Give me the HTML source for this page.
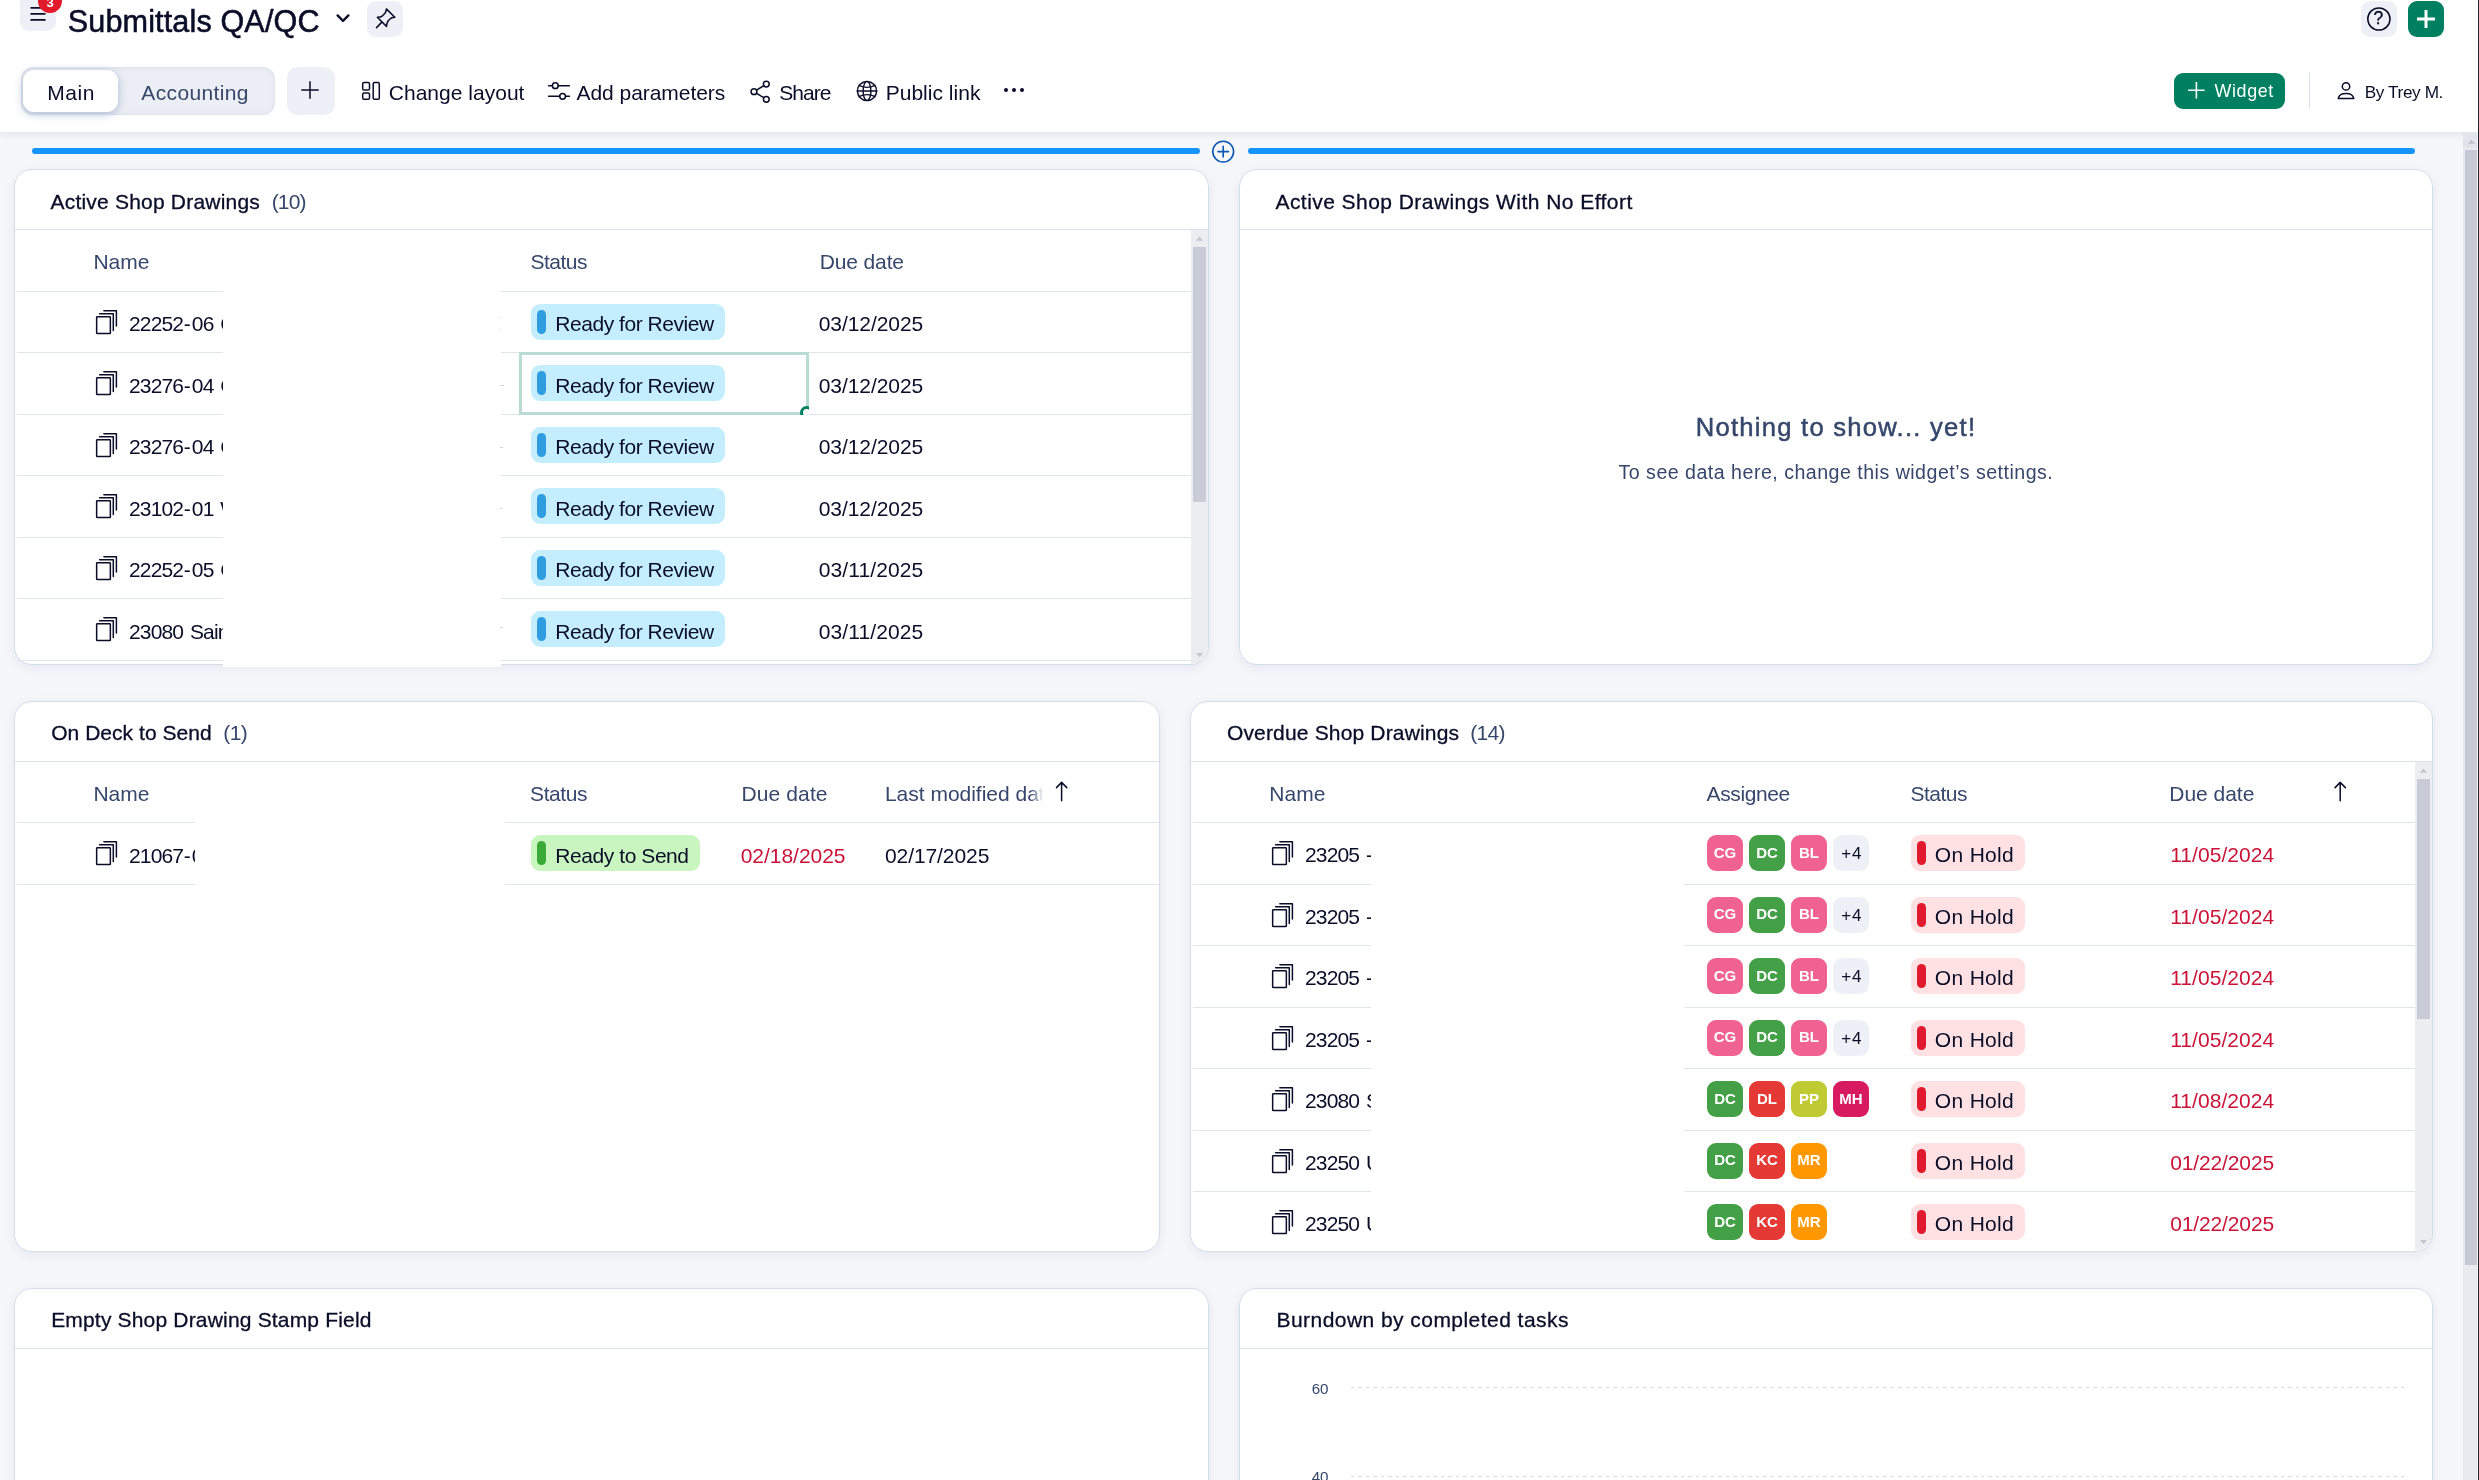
<!DOCTYPE html>
<html><head><meta charset="utf-8"><title>Submittals QA/QC</title>
<style>
html,body{margin:0;padding:0;}
body{width:2479px;height:1480px;overflow:hidden;background:#f6f7fa;font-family:"Liberation Sans",sans-serif;position:relative;}
#root{position:absolute;left:0;top:0;width:2479px;height:1480px;overflow:hidden;will-change:transform;}
#root div,#root span,#root svg{position:absolute;box-sizing:border-box;}
#root span{white-space:pre;}
.card{background:#fff;border:1px solid #d5dcea;border-radius:18px;box-shadow:0 3px 12px rgba(170,182,205,.24);}
.ln{height:1.5px;background:#e2e7f0;}
.av{width:36px;height:36px;border-radius:9px;}
#root i{font-style:normal;margin-left:.7px;letter-spacing:.95px;}
</style></head><body><div id="root">
<div style="left:0px;top:0px;width:2479px;height:132px;background:#fff;box-shadow:0 2px 9px rgba(150,165,195,.26);"></div>
<div style="left:20px;top:-6px;width:36px;height:37px;background:#edf0f6;border-radius:9px;"></div>
<svg style="left:28px;top:4px;" width="20" height="20" viewBox="28 4 20 20"><path d="M31.1 7.8H44.9M31.1 13.8H44.9M31.1 19.9H44.9" fill="none" stroke="#0a0d28" stroke-linecap="round" stroke-linejoin="round" stroke-width="1.7"/></svg>
<div style="left:37.9px;top:-11.1px;width:24.1px;height:24.1px;background:#e21a2c;border-radius:12.05px;"></div>
<span style="left:46.38px;top:-3.70px;font-size:13px;line-height:13px;color:#fff;font-weight:700;">3</span>
<span style="left:67.78px;top:5.60px;font-size:30.6px;line-height:30.6px;color:#0a0d28;letter-spacing:0.122px;-webkit-text-stroke:0.55px #0a0d28;">Submittals QA/QC</span>
<svg style="left:333px;top:11px;" width="20" height="14" viewBox="333 11 20 14"><path d="M337.6 15.4L343 20.8L348.4 15.4" fill="none" stroke="#0a0d28" stroke-linecap="round" stroke-linejoin="round" stroke-width="2.4"/></svg>
<div style="left:367px;top:1px;width:36px;height:36px;background:#edf0f6;border-radius:9px;"></div>
<svg style="left:372px;top:5px;" width="28" height="28" viewBox="372 5 28 28"><path d="M386.4 8.9L394.8 17.3Q391.3 17.6 390.3 18.7L388 21Q386.9 22.6 386.5 26.4L377.3 17.3Q380.9 17.1 382.5 15.8L385 13.2Q386.1 11.7 386.4 8.9ZM381.6 22.4L376.5 27.6" fill="none" stroke="#0a0d28" stroke-linecap="round" stroke-linejoin="round" stroke-width="1.5"/></svg>
<div style="left:2361px;top:1px;width:36px;height:36px;background:#edf0f6;border-radius:9px;"></div>
<svg style="left:2364px;top:4px;" width="30" height="30" viewBox="2364 4 30 30"><circle cx="2378.9" cy="19" r="11.1" fill="none" stroke="#0a0d28" stroke-linecap="round" stroke-linejoin="round" stroke-width="1.5"/></svg>
<span style="left:2373.60px;top:10.49px;font-size:17.5px;line-height:17.5px;color:#0a0d28;-webkit-text-stroke:0.35px #0a0d28;">?</span>
<div style="left:2408px;top:1px;width:36px;height:36px;background:#008060;border-radius:9px;"></div>
<svg style="left:2412px;top:5px;" width="28" height="28" viewBox="2412 5 28 28"><path d="M2426 10V28M2417 19H2435" fill="none" stroke="#fff" stroke-width="3"/></svg>
<div style="left:2477.7px;top:0px;width:1.3px;height:1480px;background:#22242c;"></div>
<div style="left:21px;top:67px;width:254px;height:48px;background:#ebeef4;border-radius:12px;box-shadow:inset 0 0 5px rgba(200,208,224,.55);"></div>
<div style="left:23px;top:70px;width:95px;height:42px;background:#fff;border-radius:11px;box-shadow:0 2px 8px rgba(110,135,180,.5);"></div>
<span style="left:47.26px;top:82.22px;font-size:21px;line-height:21px;color:#0a0d28;letter-spacing:0.553px;">Main</span>
<span style="left:141.26px;top:82.22px;font-size:21px;line-height:21px;color:#36476b;letter-spacing:0.376px;">Accounting</span>
<div style="left:287px;top:67px;width:48px;height:48px;background:#edf0f6;border-radius:11px;"></div>
<svg style="left:298px;top:78px;" width="24" height="24" viewBox="298 78 24 24"><path d="M310 81.8V98.2M301.8 90H318.2" fill="none" stroke="#0a0d28" stroke-linecap="round" stroke-linejoin="round" stroke-width="1.5"/></svg>
<svg style="left:360px;top:80px;" width="22" height="22" viewBox="360 80 22 22"><rect x="362.7" y="82.6" width="6.8" height="7.4" rx="1.3" fill="none" stroke="#0a0d28" stroke-linecap="round" stroke-linejoin="round" stroke-width="1.5"/><rect x="362.7" y="93.1" width="6.8" height="6.2" rx="1.3" fill="none" stroke="#0a0d28" stroke-linecap="round" stroke-linejoin="round" stroke-width="1.5"/><rect x="373.2" y="82.6" width="6.1" height="16.7" rx="1.3" fill="none" stroke="#0a0d28" stroke-linecap="round" stroke-linejoin="round" stroke-width="1.5"/></svg>
<span style="left:388.76px;top:82.22px;font-size:21px;line-height:21px;color:#0a0d28;letter-spacing:0.021px;">Change layout</span>
<svg style="left:546px;top:80px;" width="26" height="22" viewBox="546 80 26 22"><path d="M548.6 85.7H552.4M558.2 85.7H569.4M548.6 96.3H559.7M565.5 96.3H569.4" fill="none" stroke="#0a0d28" stroke-linecap="round" stroke-linejoin="round" stroke-width="1.5"/><circle cx="555.3" cy="85.7" r="2.9" fill="none" stroke="#0a0d28" stroke-linecap="round" stroke-linejoin="round" stroke-width="1.5"/><circle cx="562.6" cy="96.3" r="2.9" fill="none" stroke="#0a0d28" stroke-linecap="round" stroke-linejoin="round" stroke-width="1.5"/></svg>
<span style="left:576.56px;top:82.22px;font-size:21px;line-height:21px;color:#0a0d28;letter-spacing:-0.056px;">Add parameters</span>
<svg style="left:748px;top:78px;" width="26" height="28" viewBox="748 78 26 28"><circle cx="766.3" cy="84.1" r="2.9" fill="none" stroke="#0a0d28" stroke-linecap="round" stroke-linejoin="round" stroke-width="1.5"/><circle cx="754" cy="91.7" r="2.9" fill="none" stroke="#0a0d28" stroke-linecap="round" stroke-linejoin="round" stroke-width="1.5"/><circle cx="766.3" cy="99.3" r="2.9" fill="none" stroke="#0a0d28" stroke-linecap="round" stroke-linejoin="round" stroke-width="1.5"/><path d="M756.6 90.1L763.7 85.7M756.6 93.3L763.7 97.7" fill="none" stroke="#0a0d28" stroke-linecap="round" stroke-linejoin="round" stroke-width="1.5"/></svg>
<span style="left:779.16px;top:82.22px;font-size:21px;line-height:21px;color:#0a0d28;letter-spacing:-0.939px;">Share</span>
<svg style="left:855px;top:79px;" width="24" height="24" viewBox="855 79 24 24"><circle cx="867" cy="91" r="9.6" fill="none" stroke="#0a0d28" stroke-linecap="round" stroke-linejoin="round" stroke-width="1.5"/><ellipse cx="867" cy="91" rx="3.9" ry="9.6" fill="none" stroke="#0a0d28" stroke-linecap="round" stroke-linejoin="round" stroke-width="1.4"/><path d="M857.4 91H876.6" fill="none" stroke="#0a0d28" stroke-linecap="round" stroke-linejoin="round" stroke-width="1.7"/><path d="M859 85.3Q867 89.4 875 85.3M859 96.7Q867 92.6 875 96.7" fill="none" stroke="#0a0d28" stroke-linecap="round" stroke-linejoin="round" stroke-width="1.4"/></svg>
<span style="left:885.66px;top:82.22px;font-size:21px;line-height:21px;color:#0a0d28;letter-spacing:0.024px;">Public link</span>
<div style="left:1004.0999999999999px;top:88.1px;width:4.4px;height:4.4px;background:#0a0d28;border-radius:3px;"></div>
<div style="left:1011.8px;top:88.1px;width:4.4px;height:4.4px;background:#0a0d28;border-radius:3px;"></div>
<div style="left:1019.5px;top:88.1px;width:4.4px;height:4.4px;background:#0a0d28;border-radius:3px;"></div>
<div style="left:2174px;top:73px;width:111px;height:36px;background:#008060;border-radius:9px;"></div>
<svg style="left:2186px;top:80px;" width="22" height="22" viewBox="2186 80 22 22"><path d="M2196.4 82V98.4M2188.2 90.2H2204.6" fill="none" stroke="#fff" stroke-width="1.6"/></svg>
<span style="left:2214.58px;top:83.25px;font-size:17.9px;line-height:17.9px;color:#fff;letter-spacing:0.585px;">Widget</span>
<div style="left:2309px;top:73px;width:1.2px;height:36px;background:#dbe1ec;"></div>
<svg style="left:2335px;top:80px;" width="24" height="22" viewBox="2335 80 24 22"><circle cx="2346" cy="86.4" r="3.7" fill="none" stroke="#0a0d28" stroke-linecap="round" stroke-linejoin="round" stroke-width="1.5"/><path d="M2338.2 98.6C2338.8 95.3 2341.8 93.6 2346 93.6C2350.2 93.6 2353.2 95.3 2353.8 98.6Z" fill="none" stroke="#0a0d28" stroke-linecap="round" stroke-linejoin="round" stroke-width="1.5"/></svg>
<span style="left:2364.81px;top:83.84px;font-size:17.2px;line-height:17.2px;color:#0a0d28;letter-spacing:-0.399px;">By Trey M.</span>
<div style="left:2463px;top:132px;width:14px;height:1348px;background:#e8eaef;"></div>
<div style="left:2463px;top:132px;width:14px;height:16px;background:#e1e4ea;"></div>
<svg style="left:2466px;top:138px;" width="11" height="8" viewBox="2466 138 11 8"><path d="M2467.8 143.8L2471.4 139.8L2475 143.8Z" fill="#bcc1cc"/></svg>
<div style="left:2465px;top:150px;width:12px;height:1115px;background:#c5c9d3;"></div>
<div style="left:32px;top:148px;width:1168px;height:6px;background:#1595fb;border-radius:3px;"></div>
<div style="left:1248px;top:148px;width:1167px;height:6px;background:#1595fb;border-radius:3px;"></div>
<svg style="left:1210px;top:139px;" width="26" height="26" viewBox="1210 139 26 26"><circle cx="1223.2" cy="151.6" r="10.4" fill="none" stroke="#0b57b3" stroke-width="1.6"/><path d="M1223.2 146.3V156.9M1217.9 151.6H1228.5" fill="none" stroke="#0b57b3" stroke-width="1.6" stroke-linecap="round"/></svg>
<div class="card" style="left:14px;top:169px;width:1195px;height:496px;"></div>
<div style="left:15px;top:229px;width:1193px;height:1px;background:#dae0eb;"></div>
<span style="left:50.46px;top:191.22px;font-size:21px;line-height:21px;color:#0a0d28;letter-spacing:0.208px;-webkit-text-stroke:0.3px #0a0d28;">Active Shop Drawings</span>
<span style="left:271.66px;top:191.22px;font-size:21px;line-height:21px;color:#36476b;letter-spacing:-0.823px;">(10)</span>
<span style="left:93.46px;top:251.22px;font-size:21px;line-height:21px;color:#36476b;letter-spacing:-0.014px;">Name</span>
<span style="left:530.46px;top:251.22px;font-size:21px;line-height:21px;color:#36476b;letter-spacing:-0.511px;">Status</span>
<span style="left:819.66px;top:251.22px;font-size:21px;line-height:21px;color:#36476b;letter-spacing:-0.121px;">Due date</span>
<div style="left:17px;top:291px;width:1174px;height:1px;background:#e0e5ef;"></div>
<div style="left:17px;top:352px;width:1174px;height:1px;background:#e0e5ef;"></div>
<div style="left:17px;top:414px;width:1174px;height:1px;background:#e0e5ef;"></div>
<div style="left:17px;top:475px;width:1174px;height:1px;background:#e0e5ef;"></div>
<div style="left:17px;top:537px;width:1174px;height:1px;background:#e0e5ef;"></div>
<div style="left:17px;top:598px;width:1174px;height:1px;background:#e0e5ef;"></div>
<div style="left:17px;top:660px;width:1174px;height:1px;background:#e0e5ef;"></div>
<svg style="left:95px;top:307.9px;" width="24" height="28" viewBox="95 307.9 24 28"><g transform="translate(0,0.0)"><rect x="96.65" y="316.7" width="13.7" height="16.8" rx="0.6" fill="none" stroke="#0a0d28" stroke-linecap="round" stroke-linejoin="round" stroke-width="1.5"/><path d="M99.6 313.6H113.3V330.4M103.9 310.6H116.4V326" fill="none" stroke="#0a0d28" stroke-linecap="round" stroke-linejoin="round" stroke-width="1.5"/></g></svg>
<span style="left:128.96px;top:313.22px;font-size:21px;line-height:21px;color:#0a0d28;letter-spacing:-0.84px;word-spacing:1.8px;">22252<i>-</i>06 Ca</span>
<div style="left:531px;top:303.9px;width:194px;height:36px;background:#c4eefd;border-radius:9px;"></div>
<div style="left:537px;top:309.9px;width:9px;height:24px;background:#2d9de0;border-radius:4.5px;"></div>
<span style="left:555.36px;top:313.22px;font-size:21px;line-height:21px;color:#0a0d28;letter-spacing:-0.470px;">Ready for Review</span>
<span style="left:818.76px;top:313.22px;font-size:21px;line-height:21px;color:#0a0d28;letter-spacing:-0.069px;">03/12/2025</span>
<svg style="left:95px;top:369.4px;" width="24" height="28" viewBox="95 369.4 24 28"><g transform="translate(0,61.5)"><rect x="96.65" y="316.7" width="13.7" height="16.8" rx="0.6" fill="none" stroke="#0a0d28" stroke-linecap="round" stroke-linejoin="round" stroke-width="1.5"/><path d="M99.6 313.6H113.3V330.4M103.9 310.6H116.4V326" fill="none" stroke="#0a0d28" stroke-linecap="round" stroke-linejoin="round" stroke-width="1.5"/></g></svg>
<span style="left:128.96px;top:374.72px;font-size:21px;line-height:21px;color:#0a0d28;letter-spacing:-0.84px;word-spacing:1.8px;">23276<i>-</i>04 Ca</span>
<div style="left:531px;top:365.4px;width:194px;height:36px;background:#c4eefd;border-radius:9px;"></div>
<div style="left:537px;top:371.4px;width:9px;height:24px;background:#2d9de0;border-radius:4.5px;"></div>
<span style="left:555.36px;top:374.72px;font-size:21px;line-height:21px;color:#0a0d28;letter-spacing:-0.470px;">Ready for Review</span>
<span style="left:818.76px;top:374.72px;font-size:21px;line-height:21px;color:#0a0d28;letter-spacing:-0.069px;">03/12/2025</span>
<svg style="left:95px;top:430.9px;" width="24" height="28" viewBox="95 430.9 24 28"><g transform="translate(0,123.0)"><rect x="96.65" y="316.7" width="13.7" height="16.8" rx="0.6" fill="none" stroke="#0a0d28" stroke-linecap="round" stroke-linejoin="round" stroke-width="1.5"/><path d="M99.6 313.6H113.3V330.4M103.9 310.6H116.4V326" fill="none" stroke="#0a0d28" stroke-linecap="round" stroke-linejoin="round" stroke-width="1.5"/></g></svg>
<span style="left:128.96px;top:436.22px;font-size:21px;line-height:21px;color:#0a0d28;letter-spacing:-0.84px;word-spacing:1.8px;">23276<i>-</i>04 Ca</span>
<div style="left:531px;top:426.9px;width:194px;height:36px;background:#c4eefd;border-radius:9px;"></div>
<div style="left:537px;top:432.9px;width:9px;height:24px;background:#2d9de0;border-radius:4.5px;"></div>
<span style="left:555.36px;top:436.22px;font-size:21px;line-height:21px;color:#0a0d28;letter-spacing:-0.470px;">Ready for Review</span>
<span style="left:818.76px;top:436.22px;font-size:21px;line-height:21px;color:#0a0d28;letter-spacing:-0.069px;">03/12/2025</span>
<svg style="left:95px;top:492.4px;" width="24" height="28" viewBox="95 492.4 24 28"><g transform="translate(0,184.5)"><rect x="96.65" y="316.7" width="13.7" height="16.8" rx="0.6" fill="none" stroke="#0a0d28" stroke-linecap="round" stroke-linejoin="round" stroke-width="1.5"/><path d="M99.6 313.6H113.3V330.4M103.9 310.6H116.4V326" fill="none" stroke="#0a0d28" stroke-linecap="round" stroke-linejoin="round" stroke-width="1.5"/></g></svg>
<span style="left:128.96px;top:497.72px;font-size:21px;line-height:21px;color:#0a0d28;letter-spacing:-0.84px;word-spacing:1.8px;">23102<i>-</i>01 W</span>
<div style="left:531px;top:488.4px;width:194px;height:36px;background:#c4eefd;border-radius:9px;"></div>
<div style="left:537px;top:494.4px;width:9px;height:24px;background:#2d9de0;border-radius:4.5px;"></div>
<span style="left:555.36px;top:497.72px;font-size:21px;line-height:21px;color:#0a0d28;letter-spacing:-0.470px;">Ready for Review</span>
<span style="left:818.76px;top:497.72px;font-size:21px;line-height:21px;color:#0a0d28;letter-spacing:-0.069px;">03/12/2025</span>
<svg style="left:95px;top:553.9px;" width="24" height="28" viewBox="95 553.9 24 28"><g transform="translate(0,246.0)"><rect x="96.65" y="316.7" width="13.7" height="16.8" rx="0.6" fill="none" stroke="#0a0d28" stroke-linecap="round" stroke-linejoin="round" stroke-width="1.5"/><path d="M99.6 313.6H113.3V330.4M103.9 310.6H116.4V326" fill="none" stroke="#0a0d28" stroke-linecap="round" stroke-linejoin="round" stroke-width="1.5"/></g></svg>
<span style="left:128.96px;top:559.22px;font-size:21px;line-height:21px;color:#0a0d28;letter-spacing:-0.84px;word-spacing:1.8px;">22252<i>-</i>05 Ca</span>
<div style="left:531px;top:549.9px;width:194px;height:36px;background:#c4eefd;border-radius:9px;"></div>
<div style="left:537px;top:555.9px;width:9px;height:24px;background:#2d9de0;border-radius:4.5px;"></div>
<span style="left:555.36px;top:559.22px;font-size:21px;line-height:21px;color:#0a0d28;letter-spacing:-0.470px;">Ready for Review</span>
<span style="left:818.76px;top:559.22px;font-size:21px;line-height:21px;color:#0a0d28;letter-spacing:0.105px;">03/11/2025</span>
<svg style="left:95px;top:615.4px;" width="24" height="28" viewBox="95 615.4 24 28"><g transform="translate(0,307.5)"><rect x="96.65" y="316.7" width="13.7" height="16.8" rx="0.6" fill="none" stroke="#0a0d28" stroke-linecap="round" stroke-linejoin="round" stroke-width="1.5"/><path d="M99.6 313.6H113.3V330.4M103.9 310.6H116.4V326" fill="none" stroke="#0a0d28" stroke-linecap="round" stroke-linejoin="round" stroke-width="1.5"/></g></svg>
<span style="left:128.96px;top:620.72px;font-size:21px;line-height:21px;color:#0a0d28;letter-spacing:-0.84px;word-spacing:1.8px;">23080 Saint</span>
<div style="left:531px;top:611.4px;width:194px;height:36px;background:#c4eefd;border-radius:9px;"></div>
<div style="left:537px;top:617.4px;width:9px;height:24px;background:#2d9de0;border-radius:4.5px;"></div>
<span style="left:555.36px;top:620.72px;font-size:21px;line-height:21px;color:#0a0d28;letter-spacing:-0.470px;">Ready for Review</span>
<span style="left:818.76px;top:620.72px;font-size:21px;line-height:21px;color:#0a0d28;letter-spacing:0.105px;">03/11/2025</span>
<div style="left:519.2px;top:352px;width:289.8px;height:63px;border:3px solid #badbd1;"></div>
<div style="left:519.2px;top:352px;width:289.8px;height:63px;overflow:hidden;"><div style="left:280.6px;top:53.7px;width:13px;height:13px;border-radius:7px;border:3px solid #00805f;background:#fff;"></div></div>
<div style="left:1191px;top:230px;width:17px;height:433.5px;background:#ecedf0;border-bottom-right-radius:16px;"></div>
<svg style="left:1195px;top:234px;" width="10" height="9" viewBox="1195 234 10 9"><path d="M1195.9 240.7L1199.5 236.5L1203.1 240.7Z" fill="#c3c7d0"/></svg>
<svg style="left:1195px;top:649.5px;" width="10" height="9" viewBox="1195 649.5 10 9"><path d="M1195.9 652.6L1199.5 656.8L1203.1 652.6Z" fill="#c3c7d0"/></svg>
<div style="left:1193px;top:247px;width:13px;height:255.3px;background:#c8ccd6;"></div>
<div style="left:222.5px;top:288px;width:278px;height:378.5px;background:#fff;"></div>
<div style="left:500.3px;top:317px;width:1.2px;height:1.2px;background:#cfd3dc;"></div>
<div style="left:500.3px;top:329.3px;width:1.2px;height:1.2px;background:#cfd3dc;"></div>
<div style="left:500.3px;top:385px;width:3.6px;height:1.2px;background:#cfd3dc;"></div>
<div style="left:500.3px;top:446.7px;width:3px;height:1.2px;background:#cfd3dc;"></div>
<div style="left:500.3px;top:508px;width:1.5px;height:1.2px;background:#cfd3dc;"></div>
<div style="left:500.3px;top:627.3px;width:3px;height:1.2px;background:#cfd3dc;"></div>
<div class="card" style="left:1239px;top:169px;width:1194px;height:496px;"></div>
<div style="left:1240px;top:229px;width:1192px;height:1px;background:#dae0eb;"></div>
<span style="left:1275.46px;top:191.22px;font-size:21px;line-height:21px;color:#0a0d28;letter-spacing:0.447px;-webkit-text-stroke:0.3px #0a0d28;">Active Shop Drawings With No Effort</span>
<span style="left:1695.78px;top:414.83px;font-size:25.6px;line-height:25.6px;color:#36476b;letter-spacing:1.249px;-webkit-text-stroke:0.5px #36476b;">Nothing to show... yet!</span>
<span style="left:1618.52px;top:462.81px;font-size:19.6px;line-height:19.6px;color:#36476b;letter-spacing:0.487px;">To see data here, change this widget’s settings.</span>
<div class="card" style="left:14px;top:701px;width:1146px;height:551px;"></div>
<div style="left:15px;top:761px;width:1144px;height:1px;background:#dae0eb;"></div>
<span style="left:51.16px;top:722.22px;font-size:21px;line-height:21px;color:#0a0d28;letter-spacing:0.041px;-webkit-text-stroke:0.3px #0a0d28;">On Deck to Send</span>
<span style="left:223.36px;top:722.22px;font-size:21px;line-height:21px;color:#36476b;letter-spacing:-0.591px;">(1)</span>
<span style="left:93.46px;top:783.32px;font-size:21px;line-height:21px;color:#36476b;letter-spacing:-0.014px;">Name</span>
<span style="left:530.06px;top:783.32px;font-size:21px;line-height:21px;color:#36476b;letter-spacing:-0.411px;">Status</span>
<span style="left:741.46px;top:783.32px;font-size:21px;line-height:21px;color:#36476b;letter-spacing:0.122px;">Due date</span>
<span style="left:884.96px;top:783.32px;font-size:21px;line-height:21px;color:#36476b;letter-spacing:-0.015px;">Last modified dat</span>
<div style="left:1030px;top:780px;width:18px;height:28px;background:linear-gradient(90deg,rgba(255,255,255,0),#fff 75%);"></div>
<svg style="left:1052px;top:778px;" width="20" height="26" viewBox="1052 778 20 26"><path d="M1061.6 800.7V782.6M1056.5 787.6L1061.6 782.4L1066.8 787.6" fill="none" stroke="#0a0d28" stroke-linecap="round" stroke-linejoin="round" stroke-width="1.5"/></svg>
<div style="left:17px;top:822px;width:1142px;height:1px;background:#e0e5ef;"></div>
<div style="left:17px;top:884px;width:1142px;height:1px;background:#e0e5ef;"></div>
<svg style="left:95px;top:839.3px;" width="24" height="28" viewBox="95 839.3 24 28"><g transform="translate(0,531.4)"><rect x="96.65" y="316.7" width="13.7" height="16.8" rx="0.6" fill="none" stroke="#0a0d28" stroke-linecap="round" stroke-linejoin="round" stroke-width="1.5"/><path d="M99.6 313.6H113.3V330.4M103.9 310.6H116.4V326" fill="none" stroke="#0a0d28" stroke-linecap="round" stroke-linejoin="round" stroke-width="1.5"/></g></svg>
<span style="left:128.96px;top:844.62px;font-size:21px;line-height:21px;color:#0a0d28;letter-spacing:-0.84px;word-spacing:1.8px;">21067<i>-</i>01</span>
<div style="left:531px;top:835.3px;width:169px;height:36px;background:#c9f5bf;border-radius:9px;"></div>
<div style="left:537px;top:841.3px;width:9px;height:24px;background:#3aa935;border-radius:4.5px;"></div>
<span style="left:555.36px;top:844.62px;font-size:21px;line-height:21px;color:#0a0d28;letter-spacing:-0.437px;">Ready to Send</span>
<span style="left:740.66px;top:844.62px;font-size:21px;line-height:21px;color:#cb1237;letter-spacing:-0.024px;">02/18/2025</span>
<span style="left:884.96px;top:844.62px;font-size:21px;line-height:21px;color:#0a0d28;letter-spacing:-0.080px;">02/17/2025</span>
<div style="left:195px;top:816px;width:310px;height:72px;background:#fff;"></div>
<div class="card" style="left:1190px;top:701px;width:1243px;height:551px;"></div>
<div style="left:1191px;top:761px;width:1241px;height:1px;background:#dae0eb;"></div>
<span style="left:1226.96px;top:722.22px;font-size:21px;line-height:21px;color:#0a0d28;letter-spacing:0.165px;-webkit-text-stroke:0.3px #0a0d28;">Overdue Shop Drawings</span>
<span style="left:1470.16px;top:722.22px;font-size:21px;line-height:21px;color:#36476b;letter-spacing:-0.656px;">(14)</span>
<span style="left:1269.26px;top:783.32px;font-size:21px;line-height:21px;color:#36476b;letter-spacing:0.086px;">Name</span>
<span style="left:1706.56px;top:783.32px;font-size:21px;line-height:21px;color:#36476b;letter-spacing:-0.386px;">Assignee</span>
<span style="left:1910.46px;top:783.32px;font-size:21px;line-height:21px;color:#36476b;letter-spacing:-0.511px;">Status</span>
<span style="left:2169.26px;top:783.32px;font-size:21px;line-height:21px;color:#36476b;letter-spacing:-0.021px;">Due date</span>
<svg style="left:2330px;top:778px;" width="20" height="26" viewBox="2330 778 20 26"><path d="M2340.2 800.7V782.6M2335.1 787.6L2340.2 782.4L2345.4 787.6" fill="none" stroke="#0a0d28" stroke-linecap="round" stroke-linejoin="round" stroke-width="1.5"/></svg>
<div style="left:1193px;top:822px;width:1222px;height:1px;background:#e0e5ef;"></div>
<div style="left:1193px;top:884px;width:1222px;height:1px;background:#e0e5ef;"></div>
<div style="left:1193px;top:945px;width:1222px;height:1px;background:#e0e5ef;"></div>
<div style="left:1193px;top:1007px;width:1222px;height:1px;background:#e0e5ef;"></div>
<div style="left:1193px;top:1068px;width:1222px;height:1px;background:#e0e5ef;"></div>
<div style="left:1193px;top:1130px;width:1222px;height:1px;background:#e0e5ef;"></div>
<div style="left:1193px;top:1191px;width:1222px;height:1px;background:#e0e5ef;"></div>
<svg style="left:1271px;top:839.1px;" width="24" height="28" viewBox="1271 839.1 24 28"><g transform="translate(1176,531.2)"><rect x="96.65" y="316.7" width="13.7" height="16.8" rx="0.6" fill="none" stroke="#0a0d28" stroke-linecap="round" stroke-linejoin="round" stroke-width="1.5"/><path d="M99.6 313.6H113.3V330.4M103.9 310.6H116.4V326" fill="none" stroke="#0a0d28" stroke-linecap="round" stroke-linejoin="round" stroke-width="1.5"/></g></svg>
<span style="left:1304.96px;top:844.42px;font-size:21px;line-height:21px;color:#0a0d28;letter-spacing:-0.84px;word-spacing:1.8px;">23205 - A</span>
<div style="left:1707px;top:835.1px;width:36px;height:36px;background:#f06292;border-radius:9px;"></div>
<span style="left:1707px;top:844.9px;width:36px;text-align:center;font-size:15px;line-height:16px;font-weight:700;color:#fff;">CG</span>
<div style="left:1749px;top:835.1px;width:36px;height:36px;background:#43a047;border-radius:9px;"></div>
<span style="left:1749px;top:844.9px;width:36px;text-align:center;font-size:15px;line-height:16px;font-weight:700;color:#fff;">DC</span>
<div style="left:1791px;top:835.1px;width:36px;height:36px;background:#f06292;border-radius:9px;"></div>
<span style="left:1791px;top:844.9px;width:36px;text-align:center;font-size:15px;line-height:16px;font-weight:700;color:#fff;">BL</span>
<div style="left:1833px;top:835.1px;width:36px;height:36px;background:#edf0f6;border-radius:9px;"></div>
<span style="left:1841.32px;top:845.21px;font-size:17px;line-height:17px;color:#0a0d28;letter-spacing:0.739px;">+4</span>
<div style="left:1911px;top:835.1px;width:114px;height:36px;background:#ffe1e3;border-radius:9px;"></div>
<div style="left:1917px;top:841.1px;width:9px;height:24px;background:#e1192c;border-radius:4.5px;"></div>
<span style="left:1934.86px;top:844.42px;font-size:21px;line-height:21px;color:#0a0d28;letter-spacing:0.307px;">On Hold</span>
<span style="left:2170.16px;top:844.42px;font-size:21px;line-height:21px;color:#cb1237;letter-spacing:0.049px;">11/05/2024</span>
<svg style="left:1271px;top:900.6px;" width="24" height="28" viewBox="1271 900.6 24 28"><g transform="translate(1176,592.7)"><rect x="96.65" y="316.7" width="13.7" height="16.8" rx="0.6" fill="none" stroke="#0a0d28" stroke-linecap="round" stroke-linejoin="round" stroke-width="1.5"/><path d="M99.6 313.6H113.3V330.4M103.9 310.6H116.4V326" fill="none" stroke="#0a0d28" stroke-linecap="round" stroke-linejoin="round" stroke-width="1.5"/></g></svg>
<span style="left:1304.96px;top:905.92px;font-size:21px;line-height:21px;color:#0a0d28;letter-spacing:-0.84px;word-spacing:1.8px;">23205 - A</span>
<div style="left:1707px;top:896.6px;width:36px;height:36px;background:#f06292;border-radius:9px;"></div>
<span style="left:1707px;top:906.4px;width:36px;text-align:center;font-size:15px;line-height:16px;font-weight:700;color:#fff;">CG</span>
<div style="left:1749px;top:896.6px;width:36px;height:36px;background:#43a047;border-radius:9px;"></div>
<span style="left:1749px;top:906.4px;width:36px;text-align:center;font-size:15px;line-height:16px;font-weight:700;color:#fff;">DC</span>
<div style="left:1791px;top:896.6px;width:36px;height:36px;background:#f06292;border-radius:9px;"></div>
<span style="left:1791px;top:906.4px;width:36px;text-align:center;font-size:15px;line-height:16px;font-weight:700;color:#fff;">BL</span>
<div style="left:1833px;top:896.6px;width:36px;height:36px;background:#edf0f6;border-radius:9px;"></div>
<span style="left:1841.32px;top:906.71px;font-size:17px;line-height:17px;color:#0a0d28;letter-spacing:0.739px;">+4</span>
<div style="left:1911px;top:896.6px;width:114px;height:36px;background:#ffe1e3;border-radius:9px;"></div>
<div style="left:1917px;top:902.6px;width:9px;height:24px;background:#e1192c;border-radius:4.5px;"></div>
<span style="left:1934.86px;top:905.92px;font-size:21px;line-height:21px;color:#0a0d28;letter-spacing:0.307px;">On Hold</span>
<span style="left:2170.16px;top:905.92px;font-size:21px;line-height:21px;color:#cb1237;letter-spacing:0.049px;">11/05/2024</span>
<svg style="left:1271px;top:962.1px;" width="24" height="28" viewBox="1271 962.1 24 28"><g transform="translate(1176,654.2)"><rect x="96.65" y="316.7" width="13.7" height="16.8" rx="0.6" fill="none" stroke="#0a0d28" stroke-linecap="round" stroke-linejoin="round" stroke-width="1.5"/><path d="M99.6 313.6H113.3V330.4M103.9 310.6H116.4V326" fill="none" stroke="#0a0d28" stroke-linecap="round" stroke-linejoin="round" stroke-width="1.5"/></g></svg>
<span style="left:1304.96px;top:967.42px;font-size:21px;line-height:21px;color:#0a0d28;letter-spacing:-0.84px;word-spacing:1.8px;">23205 - A</span>
<div style="left:1707px;top:958.1px;width:36px;height:36px;background:#f06292;border-radius:9px;"></div>
<span style="left:1707px;top:967.9px;width:36px;text-align:center;font-size:15px;line-height:16px;font-weight:700;color:#fff;">CG</span>
<div style="left:1749px;top:958.1px;width:36px;height:36px;background:#43a047;border-radius:9px;"></div>
<span style="left:1749px;top:967.9px;width:36px;text-align:center;font-size:15px;line-height:16px;font-weight:700;color:#fff;">DC</span>
<div style="left:1791px;top:958.1px;width:36px;height:36px;background:#f06292;border-radius:9px;"></div>
<span style="left:1791px;top:967.9px;width:36px;text-align:center;font-size:15px;line-height:16px;font-weight:700;color:#fff;">BL</span>
<div style="left:1833px;top:958.1px;width:36px;height:36px;background:#edf0f6;border-radius:9px;"></div>
<span style="left:1841.32px;top:968.21px;font-size:17px;line-height:17px;color:#0a0d28;letter-spacing:0.739px;">+4</span>
<div style="left:1911px;top:958.1px;width:114px;height:36px;background:#ffe1e3;border-radius:9px;"></div>
<div style="left:1917px;top:964.1px;width:9px;height:24px;background:#e1192c;border-radius:4.5px;"></div>
<span style="left:1934.86px;top:967.42px;font-size:21px;line-height:21px;color:#0a0d28;letter-spacing:0.307px;">On Hold</span>
<span style="left:2170.16px;top:967.42px;font-size:21px;line-height:21px;color:#cb1237;letter-spacing:0.049px;">11/05/2024</span>
<svg style="left:1271px;top:1023.5999999999999px;" width="24" height="28" viewBox="1271 1023.5999999999999 24 28"><g transform="translate(1176,715.6999999999999)"><rect x="96.65" y="316.7" width="13.7" height="16.8" rx="0.6" fill="none" stroke="#0a0d28" stroke-linecap="round" stroke-linejoin="round" stroke-width="1.5"/><path d="M99.6 313.6H113.3V330.4M103.9 310.6H116.4V326" fill="none" stroke="#0a0d28" stroke-linecap="round" stroke-linejoin="round" stroke-width="1.5"/></g></svg>
<span style="left:1304.96px;top:1028.92px;font-size:21px;line-height:21px;color:#0a0d28;letter-spacing:-0.84px;word-spacing:1.8px;">23205 - A</span>
<div style="left:1707px;top:1019.5999999999999px;width:36px;height:36px;background:#f06292;border-radius:9px;"></div>
<span style="left:1707px;top:1029.4px;width:36px;text-align:center;font-size:15px;line-height:16px;font-weight:700;color:#fff;">CG</span>
<div style="left:1749px;top:1019.5999999999999px;width:36px;height:36px;background:#43a047;border-radius:9px;"></div>
<span style="left:1749px;top:1029.4px;width:36px;text-align:center;font-size:15px;line-height:16px;font-weight:700;color:#fff;">DC</span>
<div style="left:1791px;top:1019.5999999999999px;width:36px;height:36px;background:#f06292;border-radius:9px;"></div>
<span style="left:1791px;top:1029.4px;width:36px;text-align:center;font-size:15px;line-height:16px;font-weight:700;color:#fff;">BL</span>
<div style="left:1833px;top:1019.5999999999999px;width:36px;height:36px;background:#edf0f6;border-radius:9px;"></div>
<span style="left:1841.32px;top:1029.71px;font-size:17px;line-height:17px;color:#0a0d28;letter-spacing:0.739px;">+4</span>
<div style="left:1911px;top:1019.5999999999999px;width:114px;height:36px;background:#ffe1e3;border-radius:9px;"></div>
<div style="left:1917px;top:1025.6px;width:9px;height:24px;background:#e1192c;border-radius:4.5px;"></div>
<span style="left:1934.86px;top:1028.92px;font-size:21px;line-height:21px;color:#0a0d28;letter-spacing:0.307px;">On Hold</span>
<span style="left:2170.16px;top:1028.92px;font-size:21px;line-height:21px;color:#cb1237;letter-spacing:0.049px;">11/05/2024</span>
<svg style="left:1271px;top:1085.1px;" width="24" height="28" viewBox="1271 1085.1 24 28"><g transform="translate(1176,777.1999999999999)"><rect x="96.65" y="316.7" width="13.7" height="16.8" rx="0.6" fill="none" stroke="#0a0d28" stroke-linecap="round" stroke-linejoin="round" stroke-width="1.5"/><path d="M99.6 313.6H113.3V330.4M103.9 310.6H116.4V326" fill="none" stroke="#0a0d28" stroke-linecap="round" stroke-linejoin="round" stroke-width="1.5"/></g></svg>
<span style="left:1304.96px;top:1090.42px;font-size:21px;line-height:21px;color:#0a0d28;letter-spacing:-0.84px;word-spacing:1.8px;">23080 Sa</span>
<div style="left:1707px;top:1081.1px;width:36px;height:36px;background:#43a047;border-radius:9px;"></div>
<span style="left:1707px;top:1090.9px;width:36px;text-align:center;font-size:15px;line-height:16px;font-weight:700;color:#fff;">DC</span>
<div style="left:1749px;top:1081.1px;width:36px;height:36px;background:#e53935;border-radius:9px;"></div>
<span style="left:1749px;top:1090.9px;width:36px;text-align:center;font-size:15px;line-height:16px;font-weight:700;color:#fff;">DL</span>
<div style="left:1791px;top:1081.1px;width:36px;height:36px;background:#c0ca33;border-radius:9px;"></div>
<span style="left:1791px;top:1090.9px;width:36px;text-align:center;font-size:15px;line-height:16px;font-weight:700;color:#fff;">PP</span>
<div style="left:1833px;top:1081.1px;width:36px;height:36px;background:#d81b60;border-radius:9px;"></div>
<span style="left:1833px;top:1090.9px;width:36px;text-align:center;font-size:15px;line-height:16px;font-weight:700;color:#fff;">MH</span>
<div style="left:1911px;top:1081.1px;width:114px;height:36px;background:#ffe1e3;border-radius:9px;"></div>
<div style="left:1917px;top:1087.1px;width:9px;height:24px;background:#e1192c;border-radius:4.5px;"></div>
<span style="left:1934.86px;top:1090.42px;font-size:21px;line-height:21px;color:#0a0d28;letter-spacing:0.307px;">On Hold</span>
<span style="left:2170.16px;top:1090.42px;font-size:21px;line-height:21px;color:#cb1237;letter-spacing:0.049px;">11/08/2024</span>
<svg style="left:1271px;top:1146.6px;" width="24" height="28" viewBox="1271 1146.6 24 28"><g transform="translate(1176,838.6999999999999)"><rect x="96.65" y="316.7" width="13.7" height="16.8" rx="0.6" fill="none" stroke="#0a0d28" stroke-linecap="round" stroke-linejoin="round" stroke-width="1.5"/><path d="M99.6 313.6H113.3V330.4M103.9 310.6H116.4V326" fill="none" stroke="#0a0d28" stroke-linecap="round" stroke-linejoin="round" stroke-width="1.5"/></g></svg>
<span style="left:1304.96px;top:1151.92px;font-size:21px;line-height:21px;color:#0a0d28;letter-spacing:-0.84px;word-spacing:1.8px;">23250 Un</span>
<div style="left:1707px;top:1142.6px;width:36px;height:36px;background:#43a047;border-radius:9px;"></div>
<span style="left:1707px;top:1152.4px;width:36px;text-align:center;font-size:15px;line-height:16px;font-weight:700;color:#fff;">DC</span>
<div style="left:1749px;top:1142.6px;width:36px;height:36px;background:#e53935;border-radius:9px;"></div>
<span style="left:1749px;top:1152.4px;width:36px;text-align:center;font-size:15px;line-height:16px;font-weight:700;color:#fff;">KC</span>
<div style="left:1791px;top:1142.6px;width:36px;height:36px;background:#ff9800;border-radius:9px;"></div>
<span style="left:1791px;top:1152.4px;width:36px;text-align:center;font-size:15px;line-height:16px;font-weight:700;color:#fff;">MR</span>
<div style="left:1911px;top:1142.6px;width:114px;height:36px;background:#ffe1e3;border-radius:9px;"></div>
<div style="left:1917px;top:1148.6px;width:9px;height:24px;background:#e1192c;border-radius:4.5px;"></div>
<span style="left:1934.86px;top:1151.92px;font-size:21px;line-height:21px;color:#0a0d28;letter-spacing:0.307px;">On Hold</span>
<span style="left:2170.16px;top:1151.92px;font-size:21px;line-height:21px;color:#cb1237;letter-spacing:-0.124px;">01/22/2025</span>
<svg style="left:1271px;top:1208.1px;" width="24" height="28" viewBox="1271 1208.1 24 28"><g transform="translate(1176,900.1999999999999)"><rect x="96.65" y="316.7" width="13.7" height="16.8" rx="0.6" fill="none" stroke="#0a0d28" stroke-linecap="round" stroke-linejoin="round" stroke-width="1.5"/><path d="M99.6 313.6H113.3V330.4M103.9 310.6H116.4V326" fill="none" stroke="#0a0d28" stroke-linecap="round" stroke-linejoin="round" stroke-width="1.5"/></g></svg>
<span style="left:1304.96px;top:1213.42px;font-size:21px;line-height:21px;color:#0a0d28;letter-spacing:-0.84px;word-spacing:1.8px;">23250 Un</span>
<div style="left:1707px;top:1204.1px;width:36px;height:36px;background:#43a047;border-radius:9px;"></div>
<span style="left:1707px;top:1213.9px;width:36px;text-align:center;font-size:15px;line-height:16px;font-weight:700;color:#fff;">DC</span>
<div style="left:1749px;top:1204.1px;width:36px;height:36px;background:#e53935;border-radius:9px;"></div>
<span style="left:1749px;top:1213.9px;width:36px;text-align:center;font-size:15px;line-height:16px;font-weight:700;color:#fff;">KC</span>
<div style="left:1791px;top:1204.1px;width:36px;height:36px;background:#ff9800;border-radius:9px;"></div>
<span style="left:1791px;top:1213.9px;width:36px;text-align:center;font-size:15px;line-height:16px;font-weight:700;color:#fff;">MR</span>
<div style="left:1911px;top:1204.1px;width:114px;height:36px;background:#ffe1e3;border-radius:9px;"></div>
<div style="left:1917px;top:1210.1px;width:9px;height:24px;background:#e1192c;border-radius:4.5px;"></div>
<span style="left:1934.86px;top:1213.42px;font-size:21px;line-height:21px;color:#0a0d28;letter-spacing:0.307px;">On Hold</span>
<span style="left:2170.16px;top:1213.42px;font-size:21px;line-height:21px;color:#cb1237;letter-spacing:-0.124px;">01/22/2025</span>
<div style="left:2415px;top:761.8px;width:17px;height:488.70000000000005px;background:#ecedf0;border-bottom-right-radius:16px;"></div>
<svg style="left:2419px;top:765.8px;" width="10" height="9" viewBox="2419 765.8 10 9"><path d="M2419.9 772.5L2423.5 768.3L2427.1 772.5Z" fill="#c3c7d0"/></svg>
<svg style="left:2419px;top:1236.5px;" width="10" height="9" viewBox="2419 1236.5 10 9"><path d="M2419.9 1239.6L2423.5 1243.8L2427.1 1239.6Z" fill="#c3c7d0"/></svg>
<div style="left:2417px;top:778.8px;width:13px;height:240.70000000000005px;background:#c8ccd6;"></div>
<div style="left:1371px;top:826px;width:312.5px;height:424px;background:#fff;"></div>
<div class="card" style="left:14px;top:1288px;width:1195px;height:300px;"></div>
<div style="left:15px;top:1348px;width:1193px;height:1px;background:#dae0eb;"></div>
<span style="left:51.16px;top:1309.22px;font-size:21px;line-height:21px;color:#0a0d28;letter-spacing:0.178px;-webkit-text-stroke:0.3px #0a0d28;">Empty Shop Drawing Stamp Field</span>
<div class="card" style="left:1239px;top:1288px;width:1194px;height:300px;"></div>
<div style="left:1240px;top:1348px;width:1192px;height:1px;background:#dae0eb;"></div>
<span style="left:1276.46px;top:1309.22px;font-size:21px;line-height:21px;color:#0a0d28;letter-spacing:0.455px;-webkit-text-stroke:0.3px #0a0d28;">Burndown by completed tasks</span>
<span style="left:1311.69px;top:1380.83px;font-size:15.2px;line-height:15.2px;color:#36476b;letter-spacing:-0.238px;">60</span>
<span style="left:1311.69px;top:1469.33px;font-size:15.2px;line-height:15.2px;color:#36476b;letter-spacing:-0.238px;">40</span>
<div style="left:1351px;top:1386.5px;width:1054px;height:1.5px;background:repeating-linear-gradient(90deg,#d3daea 0 3.2px,transparent 3.2px 7.5px);"></div>
<div style="left:1351px;top:1475.5px;width:1054px;height:1.5px;background:repeating-linear-gradient(90deg,#d3daea 0 3.2px,transparent 3.2px 7.5px);"></div>
</div></body></html>
